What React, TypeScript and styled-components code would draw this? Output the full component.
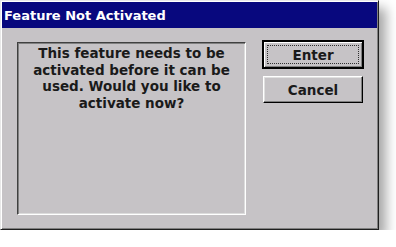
import React from 'react';
import styled, { createGlobalStyle } from 'styled-components';

const GREY = '#c6c3c6';
const NAVY = '#08087e';

const GlobalStyle = createGlobalStyle`
  html, body {
    margin: 0;
    background: #ffffff;
  }
`;

const Window = styled.div`
  width: 379px;
  height: 230px;
  box-sizing: border-box;
  background: ${GREY};
  border-top: 1px solid #e8e8e8;
  border-left: 1px solid #e8e8e8;
  border-right: 1px solid #202020;
  border-bottom: 1px solid #202020;
  box-shadow: inset 1px 1px 0 #ffffff, inset -1px -1px 0 #808080, 7px 8px 11px rgba(0, 0, 0, 0.35);
  padding: 1px;
  display: flex;
  flex-direction: column;
  font-family: 'DejaVu Sans', Verdana, sans-serif;
`;

const TitleBar = styled.div`
  height: 26px;
  background: ${NAVY};
  color: #ffffff;
  font-size: 13px;
  font-weight: bold;
  display: flex;
  align-items: center;
  padding-left: 2px;
  flex-shrink: 0;
`;

const Body = styled.div`
  flex: 1;
  display: flex;
  gap: 17px;
  padding: 14px 14px 13px 15px;
`;

const MessagePanel = styled.div`
  width: 229px;
  box-sizing: border-box;
  border-top: 1px solid #404040;
  border-left: 1px solid #404040;
  border-right: 1px solid #ffffff;
  border-bottom: 1px solid #ffffff;
  box-shadow: inset 1px 1px 0 #808080, 1px 1px 0 ${GREY}, inset -1px -1px 0 #dcdcdc;
  padding: 2px 4px;
  font-size: 13.5px;
  font-weight: bold;
  line-height: 16.5px;
  text-align: center;
  color: #1a1a1a;
`;

const ButtonColumn = styled.div`
  display: flex;
  flex-direction: column;
  gap: 8px;
  margin-top: -1px;
`;

const DialogButton = styled.button<{ $default?: boolean }>`
  width: 100px;
  height: 27px;
  box-sizing: border-box;
  background: ${GREY};
  font-family: inherit;
  font-size: 13.5px;
  font-weight: bold;
  color: #1a1a1a;
  padding: 0;
  border-top: 1px solid ${(p) => (p.$default ? '#000000' : '#ffffff')};
  border-left: 1px solid ${(p) => (p.$default ? '#000000' : '#ffffff')};
  border-right: 1px solid #000000;
  border-bottom: 1px solid #000000;
  box-shadow: ${(p) =>
    p.$default
      ? 'inset 1px 1px 0 #ffffff, inset -1px -1px 0 #808080, 0 0 0 1px #000000'
      : 'inset -1px -1px 0 #808080, inset 1px 1px 0 #e0e0e0'};
  position: relative;
`;

const FocusRing = styled.span`
  position: absolute;
  inset: 3px;
  border: 1px dotted #303030;
  pointer-events: none;
`;

const Label = styled.span`
  position: relative;
`;

export default function App() {
  return (
    <>
      <GlobalStyle />
      <Window>
        <TitleBar>Feature Not Activated</TitleBar>
        <Body>
          <MessagePanel>
            This feature needs to be activated before it can be used. Would you like to activate now?
          </MessagePanel>
          <ButtonColumn>
            <DialogButton $default>
              <FocusRing />
              <Label>Enter</Label>
            </DialogButton>
            <DialogButton>
              <Label>Cancel</Label>
            </DialogButton>
          </ButtonColumn>
        </Body>
      </Window>
    </>
  );
}
